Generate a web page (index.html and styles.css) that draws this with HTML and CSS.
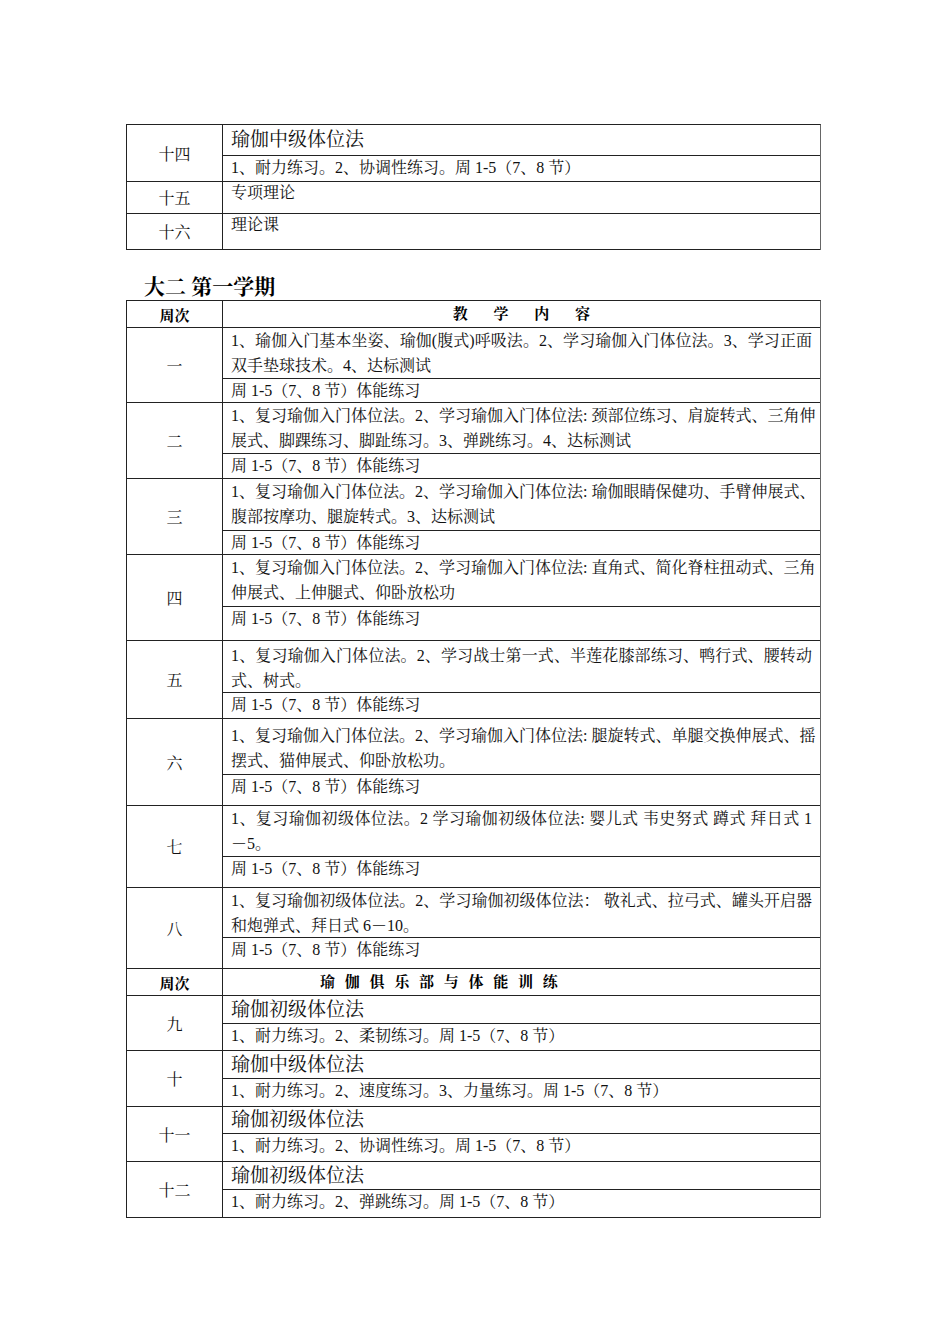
FILE: index.html
```html
<!DOCTYPE html>
<html lang="zh-CN">
<head>
<meta charset="utf-8">
<title>瑜伽课程教学进度</title>
<link rel="stylesheet" href="styles.css">
</head>
<body>
<div class="page">
  <div class="tbl">
    <div class="row">
      <div class="wk">十四</div>
      <div class="cells">
        <div class="c big h30">瑜伽中级体位法</div>
        <div class="c h25 one">1、耐力练习。2、协调性练习。周 1-5（7、8 节）</div>
      </div>
    </div>
    <div class="row">
      <div class="wk">十五</div>
      <div class="cells">
        <div class="c h31 top">专项理论</div>
      </div>
    </div>
    <div class="row">
      <div class="wk">十六</div>
      <div class="cells">
        <div class="c h35 top">理论课</div>
      </div>
    </div>
  </div>

  <h2 class="term">大二 第一学期</h2>

  <div class="tbl">
    <div class="row hd">
      <div class="wk">周次</div>
      <div class="cells"><div class="c h26 title1">教 学 内 容</div></div>
    </div>

    <div class="row">
      <div class="wk">一</div>
      <div class="cells">
        <div class="c h50 two"><div class="j">1、瑜伽入门基本坐姿、瑜伽(腹式)呼吸法。2、学习瑜伽入门体位法。3、学习正面</div><div>双手垫球技术。4、达标测试</div></div>
        <div class="c h23 one">周 1-5（7、8 节）体能练习</div>
      </div>
    </div>
    <div class="row">
      <div class="wk">二</div>
      <div class="cells">
        <div class="c h50 two"><div class="j">1、复习瑜伽入门体位法。2、学习瑜伽入门体位法: 颈部位练习、肩旋转式、三角伸</div><div>展式、脚踝练习、脚趾练习。3、弹跳练习。4、达标测试</div></div>
        <div class="c h24 one">周 1-5（7、8 节）体能练习</div>
      </div>
    </div>
    <div class="row">
      <div class="wk">三</div>
      <div class="cells">
        <div class="c h51 two"><div class="j">1、复习瑜伽入门体位法。2、学习瑜伽入门体位法: 瑜伽眼睛保健功、手臂伸展式、</div><div>腹部按摩功、腿旋转式。3、达标测试</div></div>
        <div class="c h23 one">周 1-5（7、8 节）体能练习</div>
      </div>
    </div>
    <div class="row">
      <div class="wk">四</div>
      <div class="cells">
        <div class="c h51 two"><div class="j">1、复习瑜伽入门体位法。2、学习瑜伽入门体位法: 直角式、简化脊柱扭动式、三角</div><div>伸展式、上伸腿式、仰卧放松功</div></div>
        <div class="c h33 one">周 1-5（7、8 节）体能练习</div>
      </div>
    </div>
    <div class="row">
      <div class="wk">五</div>
      <div class="cells">
        <div class="c h49 two pt2"><div class="j">1、复习瑜伽入门体位法。2、学习战士第一式、半莲花膝部练习、鸭行式、腰转动</div><div>式、树式。</div></div>
        <div class="c h25 one">周 1-5（7、8 节）体能练习</div>
      </div>
    </div>
    <div class="row">
      <div class="wk">六</div>
      <div class="cells">
        <div class="c h51 two pt4"><div class="j">1、复习瑜伽入门体位法。2、学习瑜伽入门体位法: 腿旋转式、单腿交换伸展式、摇</div><div>摆式、猫伸展式、仰卧放松功。</div></div>
        <div class="c h30 one">周 1-5（7、8 节）体能练习</div>
      </div>
    </div>
    <div class="row">
      <div class="wk">七</div>
      <div class="cells">
        <div class="c h50 two"><div class="j">1、复习瑜伽初级体位法。2 学习瑜伽初级体位法: 婴儿式 韦史努式 蹲式 拜日式 1</div><div>－5。</div></div>
        <div class="c h30 one">周 1-5（7、8 节）体能练习</div>
      </div>
    </div>
    <div class="row">
      <div class="wk">八</div>
      <div class="cells">
        <div class="c h49 two"><div class="j">1、复习瑜伽初级体位法。2、学习瑜伽初级体位法： 敬礼式、拉弓式、罐头开启器</div><div>和炮弹式、拜日式 6－10。</div></div>
        <div class="c h30 one">周 1-5（7、8 节）体能练习</div>
      </div>
    </div>

    <div class="row hd">
      <div class="wk">周次</div>
      <div class="cells"><div class="c h26 title2">瑜 伽 俱 乐 部 与 体 能 训 练</div></div>
    </div>

    <div class="row">
      <div class="wk">九</div>
      <div class="cells">
        <div class="c big h27">瑜伽初级体位法</div>
        <div class="c h26 one">1、耐力练习。2、柔韧练习。周 1-5（7、8 节）</div>
      </div>
    </div>
    <div class="row">
      <div class="wk">十</div>
      <div class="cells">
        <div class="c big h27">瑜伽中级体位法</div>
        <div class="c h27 one">1、耐力练习。2、速度练习。3、力量练习。周 1-5（7、8 节）</div>
      </div>
    </div>
    <div class="row">
      <div class="wk">十一</div>
      <div class="cells">
        <div class="c big h26">瑜伽初级体位法</div>
        <div class="c h27 one">1、耐力练习。2、协调性练习。周 1-5（7、8 节）</div>
      </div>
    </div>
    <div class="row">
      <div class="wk">十二</div>
      <div class="cells">
        <div class="c big h27">瑜伽初级体位法</div>
        <div class="c h27 one">1、耐力练习。2、弹跳练习。周 1-5（7、8 节）</div>
      </div>
    </div>
  </div>
</div>
</body>
</html>
```

FILE: styles.css
```css
body {
  margin: 0;
  background: #ffffff;
  color: #111111;
  font-family: "Liberation Serif", "Noto Serif CJK SC", "Noto Sans CJK SC", serif;
  font-size: 16px;
}

.page {
  padding: 124px 0 40px 126px;
  width: 695px;
}

.tbl {
  width: 695px;
  box-sizing: border-box;
  border: 1px solid #222222;
  border-right-color: #666666;
  border-bottom: none;
}

.row {
  display: flex;
  border-bottom: 1px solid #222222;
}

.wk {
  width: 95px;
  flex: none;
  border-right: 1px solid #222222;
  display: flex;
  align-items: center;
  justify-content: center;
  font-size: 16px;
}

.cells {
  flex: 1;
  min-width: 0;
}

.c {
  box-sizing: content-box;
  padding: 0 8px;
  border-bottom: 1px solid #222222;
  line-height: 24px;
  white-space: nowrap;
  overflow: hidden;
}

.c:last-child {
  border-bottom: none;
}

.big {
  font-size: 19px;
}

.big.h30 { line-height: 30px; }
.big.h27 { line-height: 27px; }
.big.h26 { line-height: 26px; }

.two {
  line-height: 25px;
}

.one {
  line-height: 23px;
}

.top {
  line-height: 22px;
}

.j {
  text-align: justify;
  text-align-last: justify;
}

.term {
  margin: 25px 0 0 0;
  padding-left: 18px;
  font-size: 21px;
  line-height: 25px;
  font-weight: bold;
  color: #000000;
}

.hd .wk,
.hd .c {
  font-weight: bold;
  font-size: 15px;
  color: #000000;
}

.hd .c {
  line-height: 26px;
}

.title1 {
  text-align: center;
  word-spacing: 22px;
}

.title2 {
  padding-left: 97px;
  word-spacing: 6px;
}

.h23 { height: 23px; }
.h24 { height: 24px; }
.h25 { height: 25px; }
.h26 { height: 26px; }
.h27 { height: 27px; }
.h30 { height: 30px; }
.h31 { height: 31px; }
.h33 { height: 33px; }
.h35 { height: 35px; }
.h49 { height: 49px; }
.h50 { height: 50px; }
.h51 { height: 51px; }
.h55 { height: 55px; }

.pt2 { padding-top: 2px; }
.pt4 { padding-top: 4px; }
```
